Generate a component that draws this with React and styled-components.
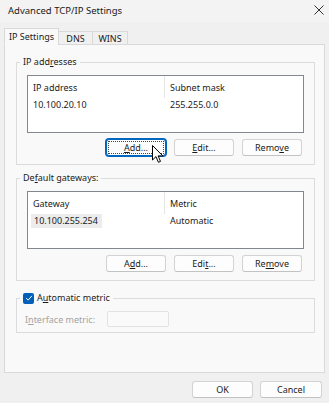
import React from 'react'
import styled, { createGlobalStyle } from 'styled-components'

const GlobalStyle = createGlobalStyle`
  html, body {
    margin: 0;
    padding: 0;
    background: #f0f0f0;
  }
`

const Window = styled.div`
  position: relative;
  width: 329px;
  height: 403px;
  overflow: hidden;
  display: flex;
  flex-direction: column;
  background: #f0f0f0;
  font-family: "Noto Sans", "DejaVu Sans", sans-serif;
  font-size: 9px;
  color: #1b1b1b;
`

const TitleBar = styled.div`
  flex: none;
  height: 22px;
  box-sizing: border-box;
  padding: 0 5px 2px 8px;
  display: flex;
  align-items: center;
  justify-content: space-between;
  background: #f3f3f3;
  font-size: 9.5px;
`

const Body = styled.div`
  padding: 6px 4px 0 4px;
  display: flex;
  flex-direction: column;
`

const TabStrip = styled.div`
  position: relative;
  z-index: 1;
  height: 17px;
  margin-bottom: -1px;
  display: flex;
  align-items: flex-end;
`

const Tab = styled.div`
  width: ${p => p.$w}px;
  height: ${p => (p.$active ? 17 : 14)}px;
  box-sizing: border-box;
  margin-left: ${p => (p.$first ? 0 : -1)}px;
  display: flex;
  align-items: center;
  justify-content: center;
  border: 1px solid #d9d9d9;
  border-bottom: 1px solid ${p => (p.$active ? '#f9f9f9' : '#d9d9d9')};
  background: ${p => (p.$active ? '#f9f9f9' : '#f0f0f0')};
  white-space: nowrap;
`

const Panel = styled.div`
  height: 329px;
  box-sizing: border-box;
  padding: 11px 9px 0 11px;
  display: flex;
  flex-direction: column;
  border: 1px solid #dadada;
  background: #f9f9f9;
`

const GroupBox = styled.fieldset`
  width: 299px;
  min-width: 0;
  box-sizing: border-box;
  margin: ${p => p.$gap || 0}px 0 0 0;
  padding: ${p => p.$pt}px 10px ${p => p.$pb}px 10px;
  border: 1px solid #dcdcdc;
`

const Legend = styled.legend`
  height: 12px;
  line-height: 12px;
  margin-left: -7px;
  padding: 0 3px;
  white-space: nowrap;
`

const CheckLabel = styled.span`
  display: flex;
  align-items: center;
  gap: 3px;
  height: 12px;
`

const ListView = styled.div`
  height: 58px;
  box-sizing: border-box;
  border: 1px solid #828790;
  background: #ffffff;
`

const ListRow = styled.div`
  height: ${p => (p.$header ? 22 : 14)}px;
  display: grid;
  grid-template-columns: 137px 1fr;
  align-items: center;
`

const HeaderCell = styled.div`
  height: 100%;
  padding-left: 5px;
  display: flex;
  align-items: center;
  border-right: ${p => (p.$divider ? '1px solid #e5e5e5' : 'none')};
`

const Cell = styled.div`
  justify-self: start;
  height: 14px;
  line-height: 14px;
  margin-left: ${p => (p.$selected ? 3 : 0)}px;
  padding: 0 ${p => (p.$selected ? 4 : 0)}px 0 ${p => (p.$selected ? 3 : 5)}px;
  background: ${p => (p.$selected ? '#ececec' : 'transparent')};
`

const ButtonRow = styled.div`
  display: flex;
  justify-content: flex-end;
  gap: 8px;
  margin-top: 6px;
  padding-right: 2px;
`

const Button = styled.button`
  position: relative;
  width: ${p => p.$w || 60}px;
  height: 17px;
  padding: 0;
  border: 1px solid ${p => (p.$focused ? '#0067c0' : '#d3d3d3')};
  border-bottom-color: ${p => (p.$focused ? '#0067c0' : '#c2c2c2')};
  border-radius: 3px;
  background: #fdfdfd;
  box-shadow: ${p => (p.$focused ? '0 0 0 1px #0067c0' : 'none')};
  font-family: inherit;
  font-size: 9px;
  color: #1b1b1b;

  &::after {
    content: '';
    display: ${p => (p.$focused ? 'block' : 'none')};
    position: absolute;
    inset: 1px;
    border: 1px dotted #444;
  }
`

const CheckBox = styled.span`
  width: 11px;
  height: 11px;
  border-radius: 2px;
  background: #005fb8;
  display: flex;
  align-items: center;
  justify-content: center;
`

const MetricRow = styled.div`
  height: 16px;
  margin-left: -2px;
  display: flex;
  align-items: center;
`

const DisabledLabel = styled.span`
  width: 82px;
  color: #a3a3a3;
`

const DisabledInput = styled.div`
  width: 62px;
  height: 16px;
  box-sizing: border-box;
  border: 1px solid #e3e3e3;
  border-radius: 2px;
  background: #fafafa;
`

const Footer = styled.div`
  display: flex;
  justify-content: flex-end;
  gap: 7px;
  padding: 8px 3px 0 0;
`

const Cursor = styled.svg`
  position: absolute;
  left: 152px;
  top: 145px;
`

const Close = () => (
  <svg width="10" height="10" viewBox="0 0 10 10">
    <path d="M0.5 0.5 L9.5 9.5 M9.5 0.5 L0.5 9.5" stroke="#333" strokeWidth="1" fill="none" />
  </svg>
)

const List = ({ cols, values, selected }) => (
  <ListView>
    <ListRow $header>
      <HeaderCell $divider>{cols[0]}</HeaderCell>
      <HeaderCell>{cols[1]}</HeaderCell>
    </ListRow>
    <ListRow>
      <Cell $selected={selected}>{values[0]}</Cell>
      <Cell>{values[1]}</Cell>
    </ListRow>
  </ListView>
)

export default function App() {
  return (
    <Window>
      <GlobalStyle />
      <TitleBar>
        <span>Advanced TCP/IP Settings</span>
        <Close />
      </TitleBar>
      <Body>
        <TabStrip>
          <Tab $w={55} $active $first>IP Settings</Tab>
          <Tab $w={35}>DNS</Tab>
          <Tab $w={36}>WINS</Tab>
        </TabStrip>
        <Panel>
          <GroupBox $pt={7} $pb={8}>
            <Legend>IP add<u>r</u>esses</Legend>
            <List cols={['IP address', 'Subnet mask']} values={['10.100.20.10', '255.255.0.0']} />
            <ButtonRow>
              <Button $focused><u>A</u>dd...</Button>
              <Button><u>E</u>dit...</Button>
              <Button>Remo<u>v</u>e</Button>
            </ButtonRow>
          </GroupBox>
          <GroupBox $gap={7} $pt={7} $pb={8}>
            <Legend>De<u>f</u>ault gateways:</Legend>
            <List cols={['Gateway', 'Metric']} values={['10.100.255.254', 'Automatic']} selected />
            <ButtonRow>
              <Button>A<u>d</u>d...</Button>
              <Button>Edi<u>t</u>...</Button>
              <Button>Re<u>m</u>ove</Button>
            </ButtonRow>
          </GroupBox>
          <GroupBox $gap={11} $pt={7} $pb={5}>
            <Legend>
              <CheckLabel>
                <CheckBox>
                  <svg width="8" height="8" viewBox="0 0 8 8">
                    <path d="M1.2 4.2 L3.2 6.1 L6.9 1.8" stroke="#fff" strokeWidth="1" fill="none" />
                  </svg>
                </CheckBox>
                <span>A<u>u</u>tomatic metric</span>
              </CheckLabel>
            </Legend>
            <MetricRow>
              <DisabledLabel>I<u>n</u>terface metric:</DisabledLabel>
              <DisabledInput />
            </MetricRow>
          </GroupBox>
        </Panel>
        <Footer>
          <Button $w={61}>OK</Button>
          <Button $w={62}>Cancel</Button>
        </Footer>
      </Body>
      <Cursor width="12" height="19" viewBox="0 0 12 19">
        <path d="M0.5 0.5 L0.5 15 L4 11.6 L6.4 17.3 L8.5 16.4 L6.1 10.9 L10.8 10.9 Z" fill="#fff" stroke="#000" strokeWidth="1" strokeLinejoin="miter" />
      </Cursor>
    </Window>
  )
}
